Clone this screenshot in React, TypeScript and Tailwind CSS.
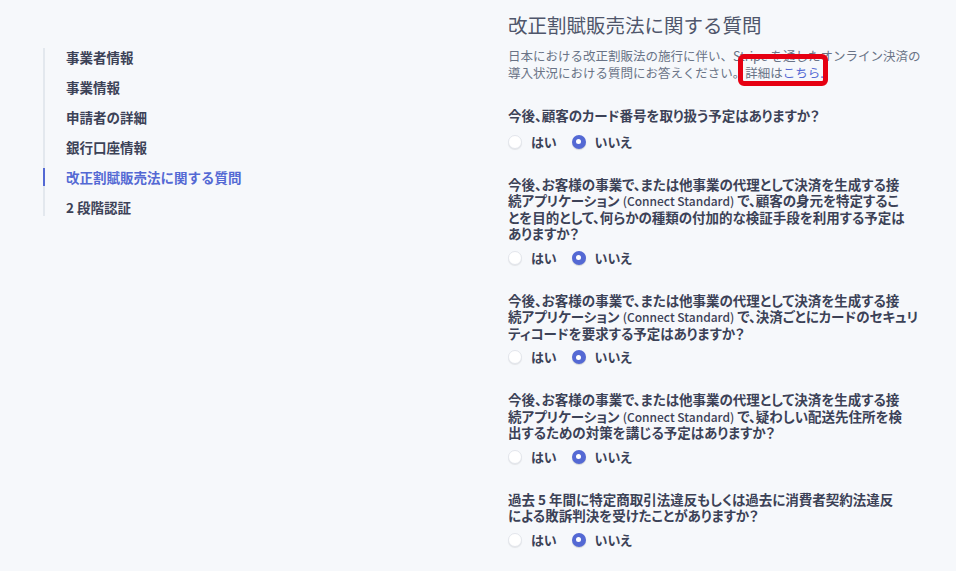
import React from 'react';

const navItems = [
  { name: '事業者情報', active: false },
  { name: '事業情報', active: false },
  { name: '申請者の詳細', active: false },
  { name: '銀行口座情報', active: false },
  { name: '改正割賦販売法に関する質問', active: true },
  { name: '2 段階認証', active: false },
];

const CS = '(Connect Standard)';

const questions: string[][] = [
  ['今後、顧客のカード番号を取り扱う予定はありますか？'],
  [
    '今後、お客様の事業で、または他事業の代理として決済を生成する接',
    '続アプリケーション # で、顧客の身元を特定するこ',
    'とを目的として、何らかの種類の付加的な検証手段を利用する予定は',
    'ありますか？',
  ],
  [
    '今後、お客様の事業で、または他事業の代理として決済を生成する接',
    '続アプリケーション # で、決済ごとにカードのセキュリ',
    'ティコードを要求する予定はありますか？',
  ],
  [
    '今後、お客様の事業で、または他事業の代理として決済を生成する接',
    '続アプリケーション # で、疑わしい配送先住所を検',
    '出するための対策を講じる予定はありますか？',
  ],
  [
    '過去 5 年間に特定商取引法違反もしくは過去に消費者契約法違反',
    'による敗訴判決を受けたことがありますか？',
  ],
];

const Radio = ({ checked, label }: { checked: boolean; label: string }) => (
  <label className="flex items-center gap-[9px]">
    {checked ? (
      <span className="w-[14px] h-[14px] rounded-full bg-[#5469d4] flex items-center justify-center shadow-[0_1px_1px_rgba(0,0,0,0.15)]">
        <span className="w-[5px] h-[5px] rounded-full bg-white" />
      </span>
    ) : (
      <span className="w-[14px] h-[14px] rounded-full bg-white border border-[#e3e6ec] shadow-[0_1px_1px_rgba(0,0,0,0.08)]" />
    )}
    <span className="text-[13px] font-bold text-[#3c4257]">{label}</span>
  </label>
);

const Line = ({ text }: { text: string }) => {
  const parts = text.split('#');
  return (
    <span className="block h-[16.5px] whitespace-nowrap">
      {parts[0]}
      {parts.length > 1 && (
        <>
          <span className="text-[12px] font-medium">{CS}</span>
          {parts[1]}
        </>
      )}
    </span>
  );
};

export default function App() {
  return (
    <div
      className="w-[956px] h-[571px] bg-[#f6f8fb] flex overflow-hidden"
      style={{ fontFamily: '"Noto Sans CJK JP", "Noto Sans", sans-serif' }}
    >
      {/* side navigation */}
      <div className="w-[508px] shrink-0 pl-[43px] pt-[48px]">
        <ul className="border-l-2 border-[#e3e8ee] flex flex-col gap-[12px]">
          {navItems.map((item) => (
            <li key={item.name} className="relative h-[18px] flex items-center pl-[21px]">
              {item.active && <span className="absolute left-[-2px] top-0 h-[18px] w-[2px] bg-[#5469d4]" />}
              <span
                className={`text-[13.5px] font-bold leading-[18px] ${
                  item.active ? 'text-[#5469d4]' : 'text-[#3c4257]'
                }`}
              >
                {item.name}
              </span>
            </li>
          ))}
        </ul>
      </div>

      {/* main content */}
      <div className="w-[430px] pt-[11px]">
        <h1 className="text-[19.5px] leading-[28px] font-normal text-[#4f566b]">改正割賦販売法に関する質問</h1>
        <p className="mt-[8px] text-[12.5px] leading-[17px] text-[#697386]">
          <span className="block whitespace-nowrap">日本における改正割販法の施行に伴い、Stripe を通したオンライン決済の</span>
          <span className="block whitespace-nowrap">
            導入状況における質問にお答えください。
            <span className="relative">
              <span className="absolute top-[-9px] bottom-[-4px] left-[-7px] right-[-4px] border-[5px] border-[#e60012] rounded-[6px]" />
              詳細は<span className="text-[#5469d4]">こちら.</span>
            </span>
          </span>
        </p>

        <div className="mt-[26px] flex flex-col gap-[24px] [font-feature-settings:'palt']">
          {questions.map((lines, i) => (
            <div key={i}>
              <div className="text-[13.5px] leading-[16.5px] font-bold text-[#3c4257]">
                {lines.map((line) => (
                  <Line key={line} text={line} />
                ))}
              </div>
              <div className={`${i === 0 ? 'mt-[8px]' : 'mt-[6px]'} h-[20px] flex items-center gap-[15px]`}>
                <Radio checked={false} label="はい" />
                <Radio checked={true} label="いいえ" />
              </div>
            </div>
          ))}
        </div>
      </div>
    </div>
  );
}
